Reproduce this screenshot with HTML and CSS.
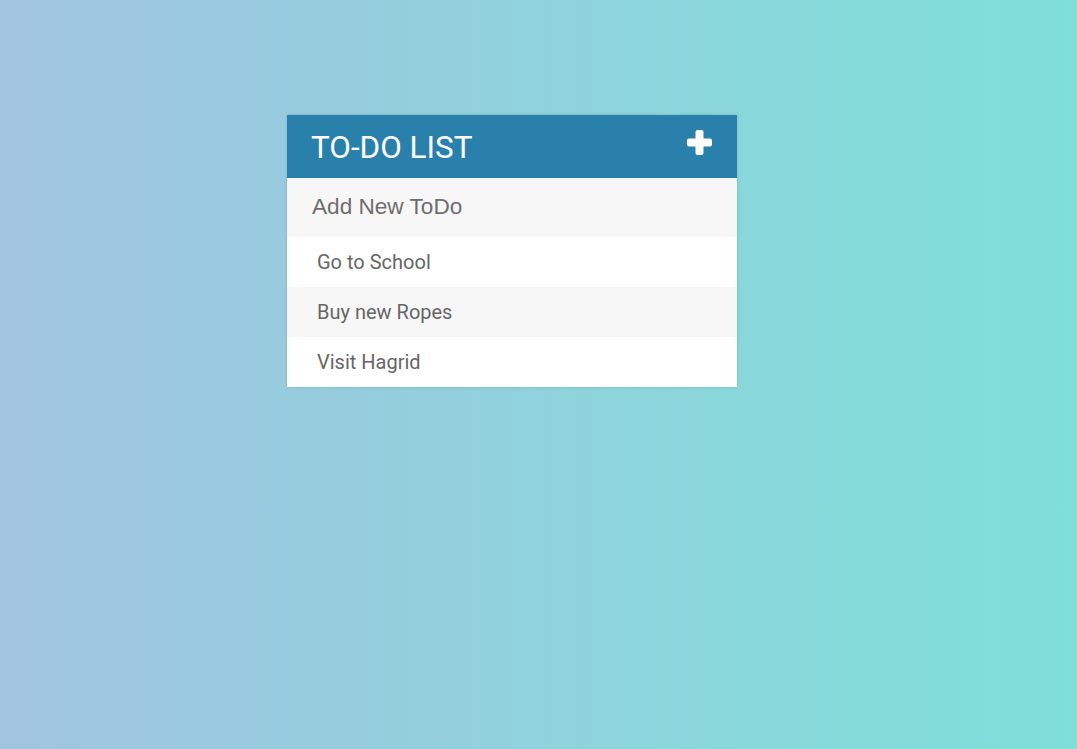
FILE: index.html
```html
<!DOCTYPE html>
<html>
<head>
<meta charset="utf-8">
<link rel="stylesheet" href="styles.css">
</head>
<body>
<div class="page">
  <div class="card">
    <div class="header">
      <h1 class="title">TO-DO LIST</h1>
      <svg class="plus" width="25" height="25" viewBox="0 0 25 25">
        <rect x="8.5" y="0" width="8" height="25" rx="2" fill="#fff"/>
        <rect x="0" y="8.5" width="25" height="8" rx="2" fill="#fff"/>
      </svg>
    </div>
    <input class="new-todo" type="text" placeholder="Add New ToDo">
    <ul class="list">
      <li class="item">Go to School</li>
      <li class="item">Buy new Ropes</li>
      <li class="item">Visit Hagrid</li>
    </ul>
  </div>
</div>
</body>
</html>
```

FILE: styles.css
```css
html, body {
  margin: 0;
  padding: 0;
  height: 100%;
}
body {
  background: linear-gradient(to right, #a1c4e1, #7ee0d8);
  font-family: Roboto, "Liberation Sans", sans-serif;
}
.page {
  padding-top: 115px;
  display: flex;
  justify-content: flex-start;
  padding-left: 287px;
}
.card {
  width: 450px;
  background: #fff;
  box-shadow: 0 0 3px rgba(0, 0, 0, 0.15);
}
.header {
  background: #2980ab;
  height: 63px;
  display: flex;
  align-items: center;
  justify-content: space-between;
  padding: 0 25px;
  box-sizing: border-box;
}
.title {
  margin: 0;
  color: #fff;
  font-weight: 400;
  font-size: 31.4px;
  line-height: 1;
  position: relative;
  top: 1px;
  left: -1px;
}
.plus {
  display: block;
  margin-top: -8px;
}
.new-todo {
  display: block;
  width: 100%;
  box-sizing: border-box;
  height: 59px;
  border: none;
  outline: none;
  background: #f7f7f7;
  padding: 0 25px 2px;
  font-family: "Liberation Sans", Arial, sans-serif;
  font-size: 22.6px;
  color: #666;
}
.new-todo::placeholder {
  color: #6e6e6e;
}
.list {
  list-style: none;
  margin: 0;
  padding: 0;
}
.item {
  height: 50px;
  display: flex;
  align-items: center;
  padding-left: 30px;
  font-size: 20px;
  color: #666;
  background: #fff;
}
.item:nth-child(2n) {
  background: #f7f7f7;
}
```
